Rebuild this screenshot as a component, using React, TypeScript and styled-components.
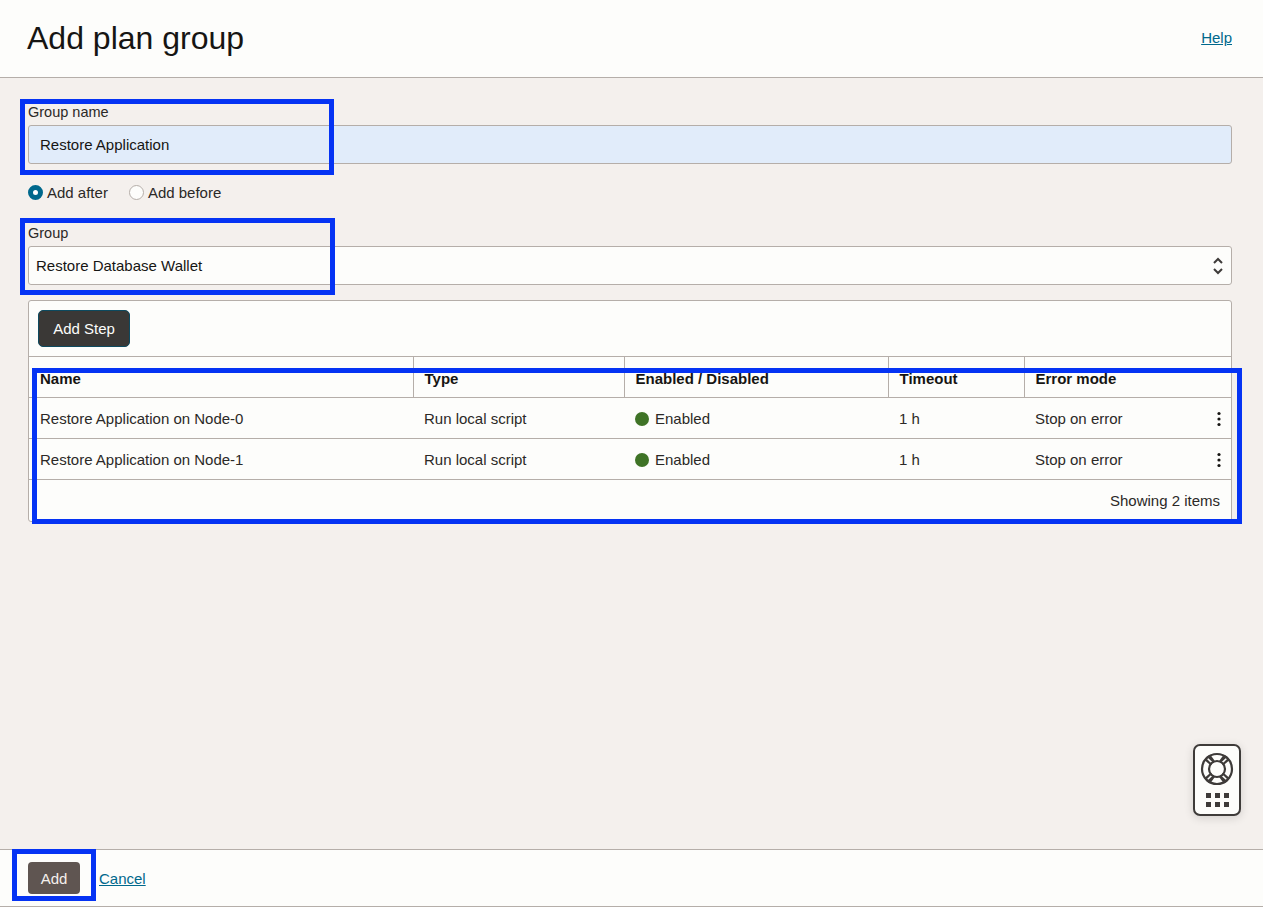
import * as React from "react";
import styled, { createGlobalStyle } from "styled-components";

const GlobalStyle = createGlobalStyle`
  html, body {
    margin: 0;
    padding: 0;
    height: 100%;
    background: #f4f0ed;
    color: #161513;
    font-family: "Liberation Sans", Arial, sans-serif;
    font-size: 15px;
  }
  * { box-sizing: border-box; }
`;

const Page = styled.div`
  position: relative;
  display: flex;
  flex-flow: column;
  height: 907px;
  overflow: hidden;
`;

const Header = styled.header`
  display: flex;
  align-items: center;
  justify-content: space-between;
  height: 78px;
  padding: 0 31px 2px 27px;
  background: #fdfdfb;
  border-bottom: 1px solid #b5aea9;
`;

const Title = styled.h1`
  margin: 0;
  font-size: 32px;
  font-weight: 400;
  line-height: 40px;
`;

const TextLink = styled.a`
  color: #00688c;
  font-size: 15px;
  text-decoration: underline;
  cursor: pointer;
`;

const Main = styled.main`
  flex: 1;
  padding: 25px 31px 0 28px;
`;

const Label = styled.label`
  display: block;
  height: 22px;
  font-size: 14.5px;
  line-height: 18px;
  color: #2b2927;
`;

const Input = styled.div<{ $filled?: boolean }>`
  display: flex;
  align-items: center;
  justify-content: space-between;
  height: 39px;
  padding: 0 ${(p) => (p.$filled ? "11px" : "7px")};
  padding-right: 7px;
  background: ${(p) => (p.$filled ? "#e1ecfa" : "#fdfdfb")};
  border: 1px solid #b5aea9;
  border-radius: 3px;
  line-height: 39px;
`;

const RadioRow = styled.div`
  display: flex;
  align-items: center;
  gap: 21px;
  height: 20px;
  margin: 18px 0 22px;
`;

const RadioOption = styled.span`
  display: flex;
  align-items: center;
  gap: 4px;
  color: #2b2927;
`;

const RadioDot = styled.span<{ $checked?: boolean }>`
  width: 15px;
  height: 15px;
  border-radius: 50%;
  background: ${(p) => (p.$checked ? "#fff" : "#fdfdfb")};
  border: ${(p) => (p.$checked ? "5px solid #00688c" : "1px solid #b5aea9")};
`;

const Panel = styled.section`
  margin-top: 15px;
  height: 222px;
  background: #fdfdfb;
  border: 1px solid #b5aea9;
  border-radius: 3px;
`;

const Toolbar = styled.div`
  display: flex;
  align-items: center;
  height: 55px;
  padding: 0 9px;
`;

const StepButton = styled.button`
  height: 37px;
  width: 92px;
  padding: 0;
  background: #3a3836;
  color: #fdfdfb;
  border: 1px solid #0d4a5f;
  border-radius: 5px;
  font: inherit;
`;

const Table = styled.table`
  width: 100%;
  border-collapse: collapse;
  table-layout: fixed;
`;

const HeadCell = styled.th<{ $width?: number }>`
  width: ${(p) => (p.$width ? `${p.$width}px` : "auto")};
  height: 41px;
  padding: 2px 11px 0;
  text-align: left;
  font-size: 15px;
  font-weight: 700;
  border-top: 1px solid #b5aea9;
  border-bottom: 1px solid #b5aea9;
  & + & {
    border-left: 1px solid #b5aea9;
  }
`;

const Cell = styled.td`
  height: 41px;
  padding: 1px 11px 0;
  border-bottom: 1px solid #b5aea9;
  color: #2b2927;
`;

const LastCell = styled(Cell)`
  padding-right: 4px;
`;

const CellRow = styled.div`
  display: flex;
  align-items: center;
  justify-content: space-between;
`;

const Status = styled.span`
  display: flex;
  align-items: center;
  gap: 6px;
`;

const StatusDot = styled.span`
  width: 14px;
  height: 14px;
  border-radius: 50%;
  background: #3f7326;
`;

const TableFooter = styled.div`
  height: 41px;
  padding-right: 11px;
  text-align: right;
  line-height: 41px;
  color: #2b2927;
`;

const Footer = styled.footer`
  display: flex;
  align-items: center;
  gap: 19px;
  height: 58px;
  padding: 0 0 0 28px;
  background: #fdfdfb;
  border-top: 1px solid #b5aea9;
  border-bottom: 1px solid #b5aea9;
`;

const AddButton = styled.button`
  width: 52px;
  height: 32px;
  padding: 0;
  background: #5f5551;
  color: #f4f0ed;
  border: 0;
  border-radius: 4px;
  font: inherit;
`;

// the blue rectangles are annotations painted on top of the screenshot
const Callout = styled.div<{ $x: number; $y: number; $w: number; $h: number }>`
  position: absolute;
  left: ${(p) => p.$x}px;
  top: ${(p) => p.$y}px;
  width: ${(p) => p.$w}px;
  height: ${(p) => p.$h}px;
  border: 5px solid #0533f4;
  pointer-events: none;
`;

const HelpWidget = styled.div`
  position: absolute;
  left: 1193px;
  top: 744px;
  display: flex;
  flex-flow: column;
  align-items: center;
  width: 48px;
  height: 72px;
  padding-top: 6px;
  background: #fdfdfb;
  border: 2px solid #3e3b39;
  border-radius: 7px;
  box-shadow: 0 2px 10px rgba(0, 0, 0, 0.14);
`;

const Icon = styled.svg`
  display: block;
  flex: none;
`;

const Chevrons = () => (
  <Icon width="12" height="20" viewBox="0 0 12 20" fill="none" stroke="#3e3b39" strokeWidth="2">
    <path d="M2 7l4-4 4 4M2 13l4 4 4-4" />
  </Icon>
);

const Kebab = () => (
  <Icon width="16" height="16" viewBox="0 0 16 16" fill="#161513">
    <circle cx="8" cy="2.5" r="1.6" />
    <circle cx="8" cy="8" r="1.6" />
    <circle cx="8" cy="13.5" r="1.6" />
  </Icon>
);

const LifeRing = () => (
  <Icon width="34" height="34" viewBox="0 0 34 34" fill="none" stroke="#3e3b39">
    <circle cx="17" cy="17" r="15" strokeWidth="2.2" />
    <circle cx="17" cy="17" r="8" strokeWidth="2.2" />
    <path
      fill="#3e3b39"
      stroke="none"
      d="M6 6l6 6-1.2 1.6L4.4 8zM28 6l-6 6 1.2 1.6L29.600 8zM6 28l6-6-1.200-1.600L4.400 26zM28 28l-6-6 1.200-1.600 6.400 5.600zM6.400 4.400l6.800 6.400 2-1.400-5-7zM27.600 4.400l-6.800 6.400-2-1.400 5-7zM6.400 29.600l6.800-6.400 2 1.400-5 7zM27.600 29.600l-6.800-6.400-2 1.400 5 7z"
    />
  </Icon>
);

const Dots = () => (
  <Icon width="24" height="14" viewBox="0 0 24 14" fill="#3e3b39" style={{ marginTop: 7 }}>
    {[1, 10, 19].map((x) => (
      <React.Fragment key={x}>
        <rect x={x} y="0" width="5" height="5" />
        <rect x={x} y="9" width="5" height="5" />
      </React.Fragment>
    ))}
  </Icon>
);

const steps = ["Restore Application on Node-0", "Restore Application on Node-1"];

const App = () => (
  <Page>
    <GlobalStyle />
    <Header>
      <Title>Add plan group</Title>
      <TextLink>Help</TextLink>
    </Header>
    <Main>
      <Label>Group name</Label>
      <Input $filled>Restore Application</Input>
      <RadioRow>
        <RadioOption>
          <RadioDot $checked />
          Add after
        </RadioOption>
        <RadioOption>
          <RadioDot />
          Add before
        </RadioOption>
      </RadioRow>
      <Label>Group</Label>
      <Input>
        Restore Database Wallet
        <Chevrons />
      </Input>
      <Panel>
        <Toolbar>
          <StepButton>Add Step</StepButton>
        </Toolbar>
        <Table>
          <thead>
            <tr>
              <HeadCell $width={384}>Name</HeadCell>
              <HeadCell $width={211}>Type</HeadCell>
              <HeadCell $width={264}>Enabled / Disabled</HeadCell>
              <HeadCell $width={136}>Timeout</HeadCell>
              <HeadCell>Error mode</HeadCell>
            </tr>
          </thead>
          <tbody>
            {steps.map((name) => (
              <tr key={name}>
                <Cell>{name}</Cell>
                <Cell>Run local script</Cell>
                <Cell>
                  <Status>
                    <StatusDot />
                    Enabled
                  </Status>
                </Cell>
                <Cell>1 h</Cell>
                <LastCell>
                  <CellRow>
                    Stop on error
                    <Kebab />
                  </CellRow>
                </LastCell>
              </tr>
            ))}
          </tbody>
        </Table>
        <TableFooter>Showing 2 items</TableFooter>
      </Panel>
    </Main>
    <Footer>
      <AddButton>Add</AddButton>
      <TextLink>Cancel</TextLink>
    </Footer>
    <Callout $x={20} $y={99} $w={314} $h={76} />
    <Callout $x={20} $y={218} $w={315} $h={77} />
    <Callout $x={32} $y={368} $w={1210} $h={156} />
    <Callout $x={12} $y={849} $w={84} $h={52} />
    <HelpWidget>
      <LifeRing />
      <Dots />
    </HelpWidget>
  </Page>
);

export default App;
